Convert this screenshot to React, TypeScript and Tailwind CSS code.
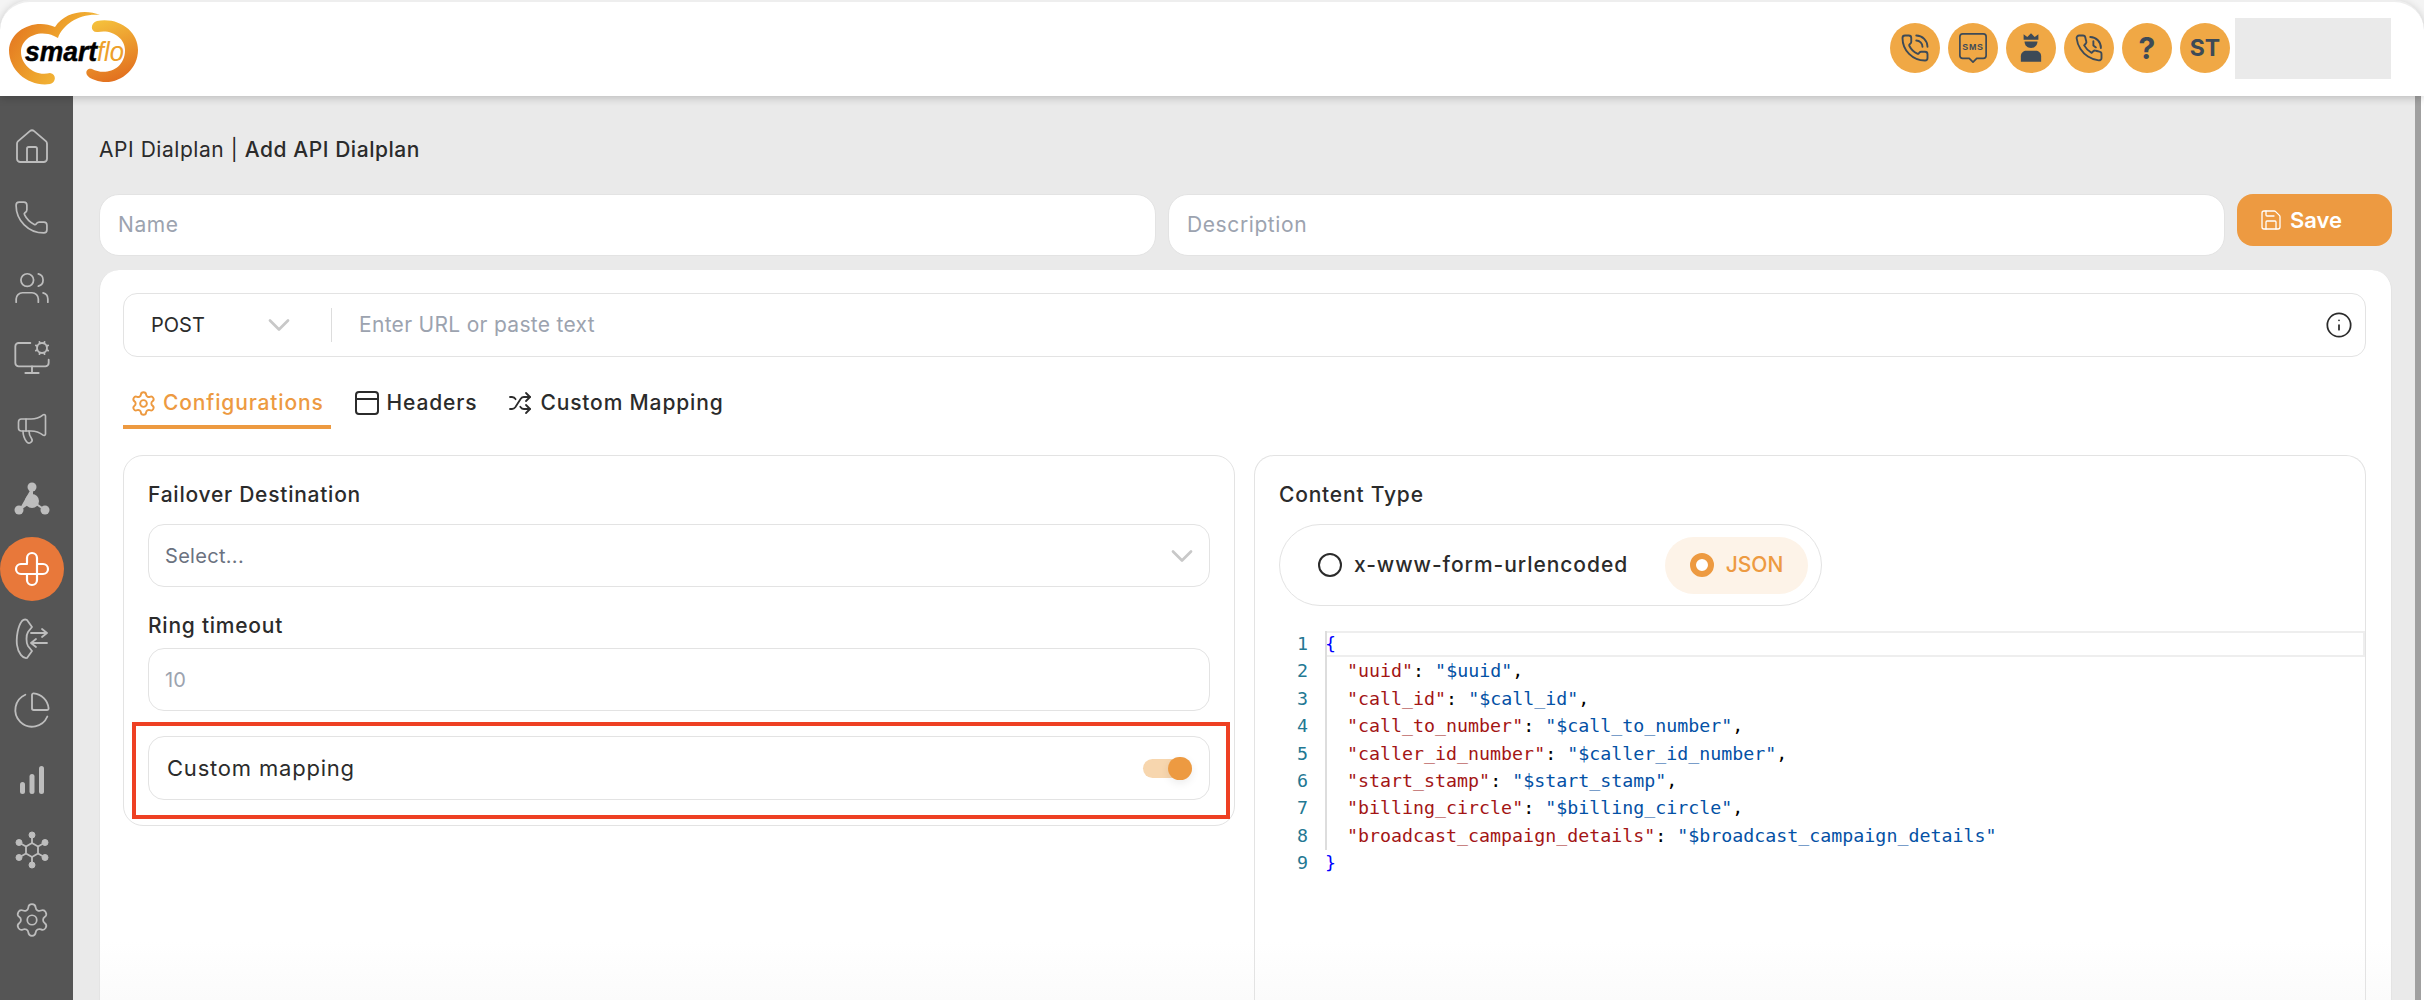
import {
  ChartPie,
  ChevronDown,
  House,
  Info,
  Megaphone,
  MonitorCog,
  Phone,
  PhoneCall,
  Save,
  Settings,
  Shuffle,
  Users,
} from "lucide-react";

const sans = "font-['Inter','Liberation_Sans',sans-serif]";

const Logo = () => (
  <svg width="150" height="96" viewBox="0 0 150 96" className="-mt-[2px] shrink-0 self-start">
    <defs>
      <linearGradient id="logoA" x1="0" y1="0.1" x2="1" y2="0.6">
        <stop offset="0" stopColor="#e2701f" />
        <stop offset="0.5" stopColor="#eda02b" />
        <stop offset="1" stopColor="#f6c53f" />
      </linearGradient>
      <linearGradient id="logoB" x1="0.2" y1="0" x2="0.5" y2="1">
        <stop offset="0" stopColor="#f5c23d" />
        <stop offset="1" stopColor="#e2701f" />
      </linearGradient>
    </defs>
    <path
      d="M100 15C85 9 65 12 55 27C35 18 10 30 9 50C9 72 30 87 50 84C56 83 57 74 50 73C35 77 21 65 21 52C21 38 38 29 54 36L58 38C63 24 80 13 100 15Z"
      fill="url(#logoA)"
    />
    <path
      d="M97 21C120 17 138 32 138 50C138 72 115 88 95 80C82 76 86 67 92 69C105 76 125 70 125 50C125 38 112 29 98 32C90 33 90 23 97 21Z"
      fill="url(#logoB)"
    />
    <text
      x="25"
      y="61"
      fontSize="28"
      fontWeight="700"
      fontStyle="italic"
      fontFamily="'Liberation Sans', sans-serif"
      fill="#000"
      stroke="#000"
      strokeWidth="0.5"
      textLength="72"
      lengthAdjust="spacingAndGlyphs"
    >
      smart
    </text>
    <text
      x="97"
      y="61"
      fontSize="28"
      fontStyle="italic"
      fontFamily="'Liberation Sans', sans-serif"
      fill="#eda02b"
      textLength="27"
      lengthAdjust="spacingAndGlyphs"
    >
      flo
    </text>
  </svg>
);

const SmsIcon = () => (
  <svg width="30" height="32" viewBox="0 0 32 34" fill="none" stroke="#3d4a57" strokeWidth="1.8">
    <path d="M5 2H27Q30 2 30 5V25Q30 28 27 28H20L16 32L12 28H5Q2 28 2 25V5Q2 2 5 2Z" strokeLinejoin="round" />
    <text
      x="16"
      y="19"
      textAnchor="middle"
      fontSize="9.500"
      fontWeight="700"
      letterSpacing="0.8"
      fontFamily="'Liberation Sans', sans-serif"
      fill="#3d4a57"
      stroke="none"
    >
      SMS
    </text>
  </svg>
);

const KingIcon = () => (
  <svg width="24" height="32" viewBox="0 0 26 34" fill="#3d4a57">
    <path d="M5 2L9 5L13 1L17 5L21 2V8H5Z" />
    <path d="M6 10H20C20 14 17 17 13 17C9 17 6 14 6 10Z" />
    <path d="M2 32V26C2 22 5 20 8 20H18C21 20 24 22 24 26V32Z" />
  </svg>
);

const PhoneClockIcon = () => (
  <svg width="30" height="30" viewBox="0 0 24 24" fill="none" stroke="#3d4a57" strokeWidth="1.5" strokeLinecap="round" strokeLinejoin="round">
    <path d="M22 16.900v3a2 2 0 0 1-2.200 2 19.800 19.800 0 0 1-8.600-3.100 19.500 19.500 0 0 1-6-6A19.800 19.800 0 0 1 2.100 4.200 2 2 0 0 1 4.100 2h3a2 2 0 0 1 2 1.700c.1 1 .4 1.900.7 2.800a2 2 0 0 1-.5 2.100L8.100 9.900a16 16 0 0 0 6 6l1.300-1.300a2 2 0 0 1 2.100-.4c.9.3 1.800.6 2.800.7a2 2 0 0 1 1.700 2Z" />
    <path d="M13 3.200A8.500 8.500 0 0 1 21.500 12" />
    <path d="M15.500 6.500V10L17.500 11.500" />
  </svg>
);

const HubIcon = () => (
  <svg width="36" height="36" viewBox="0 0 36 36" fill="#bdbdbd">
    <circle cx="18" cy="6" r="4.500" />
    <circle cx="18" cy="20" r="7" />
    <circle cx="5" cy="29" r="4.500" />
    <circle cx="31" cy="29" r="4.500" />
    <path d="M18 6V20L5 29M18 20L31 29" stroke="#bdbdbd" strokeWidth="2" />
  </svg>
);

const RouteIcon = () => (
  <svg width="36" height="36" viewBox="0 0 36 36" fill="none" stroke="#fff" strokeWidth="2.200" strokeLinecap="round">
    <path d="M13 12V7A5 5 0 0 1 23 7V29A5 5 0 0 1 13 29V24" />
    <path d="M24 13H29A5 5 0 0 1 29 23H7A5 5 0 0 1 7 13H13" />
  </svg>
);

const PhoneTransferIcon = () => (
  <svg width="34" height="42" viewBox="0 0 34 42" fill="none" stroke="#bdbdbd" strokeWidth="1.800" strokeLinecap="round" strokeLinejoin="round">
    <path d="M12 2L17 9L13 14C11 17 11 25 13 28L17 33L12 40C8 41 3 35 2 27C1 19 3 8 7 3C8 2 10 1 12 2Z" />
    <path d="M16 15H32M27 11L32 15L27 19" />
    <path d="M32 25H16M21 21L16 25L21 29" />
  </svg>
);

const BarsIcon = () => (
  <svg width="26" height="30" viewBox="0 0 26 30" fill="#bdbdbd">
    <rect x="1" y="17" width="5" height="12" rx="2.500" />
    <rect x="10.500" y="9" width="5" height="20" rx="2.500" />
    <rect x="20" y="1" width="5" height="28" rx="2.500" />
  </svg>
);

const HexNetIcon = () => (
  <svg width="34" height="38" viewBox="0 0 34 38" fill="#bdbdbd" stroke="#bdbdbd">
    <circle cx="17" cy="4" r="3" />
    <circle cx="17" cy="34" r="3" />
    <circle cx="4" cy="11.500" r="3" />
    <circle cx="30" cy="11.500" r="3" />
    <circle cx="4" cy="26.500" r="3" />
    <circle cx="30" cy="26.500" r="3" />
    <path d="M17 12L23 15.500V22.500L17 26L11 22.500V15.500Z" fill="none" strokeWidth="1.800" />
    <path d="M17 4V12M17 26V34M4 11.500L11 15.500M30 11.500L23 15.500M4 26.500L11 22.500M30 26.500L23 22.500" strokeWidth="1.800" />
  </svg>
);

const side = { strokeWidth: 1.1, color: "#bdbdbd" };

const sideItems = [
  <House {...side} size={40} />,
  <Phone {...side} size={37} />,
  <Users {...side} size={38} />,
  <MonitorCog {...side} size={40} />,
  <Megaphone {...side} size={36} />,
  <HubIcon />,
  <RouteIcon />,
  <PhoneTransferIcon />,
  <ChartPie {...side} size={40} />,
  <BarsIcon />,
  <HexNetIcon />,
  <Settings {...side} size={38} />,
];

const codeLines: [string, string][] = [
  ["uuid", "$uuid"],
  ["call_id", "$call_id"],
  ["call_to_number", "$call_to_number"],
  ["caller_id_number", "$caller_id_number"],
  ["start_stamp", "$start_stamp"],
  ["billing_circle", "$billing_circle"],
  ["broadcast_campaign_details", "$broadcast_campaign_details"],
];

const HeaderCircle = ({ children }: { children: React.ReactNode }) => (
  <div className="flex h-[50px] w-[50px] items-center justify-center rounded-full bg-[#f0a845]">{children}</div>
);

const TextField = ({ placeholder }: { placeholder: string }) => (
  <div className="flex h-[62px] flex-1 items-center rounded-[20px] border border-[#e3e3e3] bg-white px-[18px] text-[21px] tracking-[0.6px] text-[#9ca3af]">
    {placeholder}
  </div>
);

const Tab = ({ icon, label, active, gap }: { icon: React.ReactNode; label: string; active?: boolean; gap: string }) => (
  <div
    className={`flex h-[64px] items-center border-b-4 px-[7px] pt-[16px] text-[21px] font-medium tracking-[0.85px] ${gap} ${
      active ? "border-[#ed9a41] text-[#ed9a41]" : "border-transparent text-[#2b2b2b]"
    }`}
  >
    {icon}
    {label}
  </div>
);

export default function App() {
  return (
    <div className={`${sans} flex h-[1000px] w-[2424px] flex-col overflow-hidden bg-[#f4f4f4]`}>
      <header className="relative z-10 flex h-[96px] shrink-0 items-center justify-between rounded-t-[30px] border-t-2 border-[#eeeeee] bg-white pb-[2px] pr-[33px] shadow-[0_2px_8px_rgba(0,0,0,0.2)]">
        <Logo />
        <div className="flex items-center gap-[8px]">
          <HeaderCircle>
            <PhoneCall size={30} strokeWidth={1.5} color="#3d4a57" />
          </HeaderCircle>
          <HeaderCircle>
            <SmsIcon />
          </HeaderCircle>
          <HeaderCircle>
            <KingIcon />
          </HeaderCircle>
          <HeaderCircle>
            <PhoneClockIcon />
          </HeaderCircle>
          <HeaderCircle>
            <span className="text-[30px] font-bold text-[#3d4a57]">?</span>
          </HeaderCircle>
          <HeaderCircle>
            <span className="text-[23px] font-bold text-[#3d4a57]">ST</span>
          </HeaderCircle>
          <div className="-ml-[3px] h-[61px] w-[156px] bg-[#eaeaea]" />
        </div>
      </header>

      <div className="flex min-h-0 flex-1">
        <aside className="flex w-[73px] shrink-0 flex-col bg-[#555555] pt-[16px]">
          {sideItems.map((icon, i) => (
            <div key={i} className="flex h-[70.3px] shrink-0 items-center justify-center pr-[10px]">
              {i === 6 ? (
                <div className="flex h-[64px] w-[64px] shrink-0 items-center justify-center rounded-full bg-[#e8783a]">{icon}</div>
              ) : (
                icon
              )}
            </div>
          ))}
        </aside>

        <main className="flex min-w-0 flex-1 flex-col bg-[#eaeaea] pl-[26px] pr-[23px]">
          <div className="flex h-[98px] shrink-0 items-center pt-[10px] text-[21px] tracking-[0.55px] text-[#2b2b2b]">
            API Dialplan |&nbsp;<span className="font-medium">Add API Dialplan</span>
          </div>

          <div className="flex shrink-0 gap-[12px]">
            <TextField placeholder="Name" />
            <TextField placeholder="Description" />
            <button className="flex h-[52px] w-[155px] items-center gap-[7px] rounded-[16px] bg-[#ed9a41] pl-[22px] text-[22px] font-semibold text-white">
              <Save size={24} strokeWidth={1.3} />
              Save
            </button>
          </div>

          <section className="mt-[14px] flex min-h-0 flex-1 flex-col rounded-t-[20px] border-x border-[#e4e4e4] bg-[linear-gradient(to_bottom,#ffffff_92%,#fbfbfb_100%)] pl-[23px] pr-[25px] pt-[23px]">
            <div className="flex h-[64px] shrink-0 items-center rounded-[14px] border border-[#e3e3e3] bg-white text-[20px]">
              <div className="flex h-[34px] w-[208px] shrink-0 items-center justify-between border-r border-[#dddddd] pl-[27px] pr-[34px] text-[#2b2b2b]">
                POST
                <ChevronDown size={36} color="#c8c8c8" strokeWidth={1.8} />
              </div>
              <span className="flex-1 pl-[27px] text-[21px] tracking-[0.3px] text-[#9ca3af]">Enter URL or paste text</span>
              <Info size={28} strokeWidth={1.5} color="#2b2b2b" className="mr-[12px]" />
            </div>

            <div className="mt-[8px] flex h-[64px] shrink-0 gap-[17px]">
              <Tab active gap="gap-[6px]" label="Configurations" icon={<Settings size={27} strokeWidth={1.7} />} />
              <Tab
                gap="gap-[8px]"
                label="Headers"
                icon={
                  <svg width="24" height="26" viewBox="0 0 24 26" fill="none" stroke="#2b2b2b" strokeWidth="2">
                    <rect x="1" y="2" width="22" height="22" rx="3" />
                    <path d="M1 9H23" />
                  </svg>
                }
              />
              <Tab gap="gap-[8px]" label="Custom Mapping" icon={<Shuffle size={24} strokeWidth={1.8} />} />
            </div>

            <div className="mt-[26px] flex min-h-0 flex-1 items-start gap-[19px]">
              <div className="flex w-[1112px] shrink-0 flex-col rounded-[20px] border border-[#e3e3e3] px-[24px] pb-[25px] pt-[25px] text-[20px] text-[#2b2b2b]">
                <label className="text-[21px] font-medium leading-[28px] tracking-[0.75px]">Failover Destination</label>
                <div className="mt-[15px] flex h-[63px] items-center justify-between rounded-[16px] border border-[#e3e3e3] pl-[16px] pr-[9px] tracking-[0.3px] text-[#6b7280]">
                  Select...
                  <ChevronDown size={36} color="#c8c8c8" strokeWidth={1.8} />
                </div>
                <label className="mt-[25px] text-[21px] font-medium leading-[28px] tracking-[0.75px]">Ring timeout</label>
                <div className="mt-[8px] flex h-[63px] items-center rounded-[16px] border border-[#e3e3e3] pl-[16px] text-[#9ca3af]">10</div>
                <div className="mt-[25px] flex h-[64px] items-center justify-between rounded-[16px] border border-[#e3e3e3] pl-[18px] pr-[17px] text-[22px] tracking-[0.8px]">
                  Custom mapping
                  <div className="relative h-[19px] w-[49px] rounded-full bg-[#f7d6ae]">
                    <div className="absolute right-0 top-[-2px] h-[23px] w-[24px] rounded-full bg-[#ed9a41] shadow-[0_3px_8px_rgba(0,0,0,0.08)]" />
                  </div>
                </div>
                <div className="pointer-events-none absolute left-[132px] top-[722px] h-[97px] w-[1098px] border-4 border-[#ee4023]" />
              </div>

              <div className="flex h-full min-w-0 flex-1 flex-col rounded-t-[20px] border border-b-0 border-[#e3e3e3] pl-[24px] pt-[25px]">
                <div className="text-[21px] font-medium leading-[28px] tracking-[0.8px] text-[#2b2b2b]">Content Type</div>
                <div className="mt-[15px] flex h-[82px] w-[543px] items-center justify-between rounded-full border border-[#e3e3e3] pl-[38px] pr-[13px] text-[21px] font-medium text-[#2b2b2b]">
                  <div className="flex items-center gap-[12px] tracking-[0.95px]">
                    <span className="h-[24px] w-[24px] rounded-full border-2 border-[#2b2b2b]" />
                    x-www-form-urlencoded
                  </div>
                  <div className="flex h-[57px] w-[143px] items-center justify-center gap-[12px] rounded-full bg-[#fdf3e8] text-[#ed9a41]">
                    <span className="h-[24px] w-[24px] rounded-full border-[6px] border-[#ed9a41] bg-white" />
                    JSON
                  </div>
                </div>

                <div className="mt-[24px] flex font-['DejaVu_Sans_Mono',monospace] text-[18.3px] leading-[27.4px]">
                  <div className="w-[29px] shrink-0 text-right text-[#237893]">
                    {Array.from({ length: 9 }, (_, i) => (
                      <div key={i}>{i + 1}</div>
                    ))}
                  </div>
                  <div className="relative ml-[17px] min-w-0 flex-1">
                    <div className="absolute left-0 right-0 top-[1px] h-[26px] border-2 border-[#eeeeee]" />
                    <div className="absolute bottom-[27px] left-0 top-[1px] w-[2px] bg-[#dddddd]" />
                    <div className="text-[#0000ff]">{"{"}</div>
                    {codeLines.map(([key, value]) => (
                      <div key={key} className="whitespace-pre text-black">
                        {"  "}
                        <span className="text-[#a31515]">"{key}"</span>:{" "}
                        <span className="text-[#0451a5]">"{value}"</span>
                        {key === "broadcast_campaign_details" ? "" : ","}
                      </div>
                    ))}
                    <div className="text-[#0000ff]">{"}"}</div>
                  </div>
                </div>
              </div>
            </div>
          </section>
        </main>
        <div className="w-[9px] shrink-0 bg-white">
          <div className="h-full w-[6px] bg-[#a0a0a0]" />
        </div>
      </div>
    </div>
  );
}
